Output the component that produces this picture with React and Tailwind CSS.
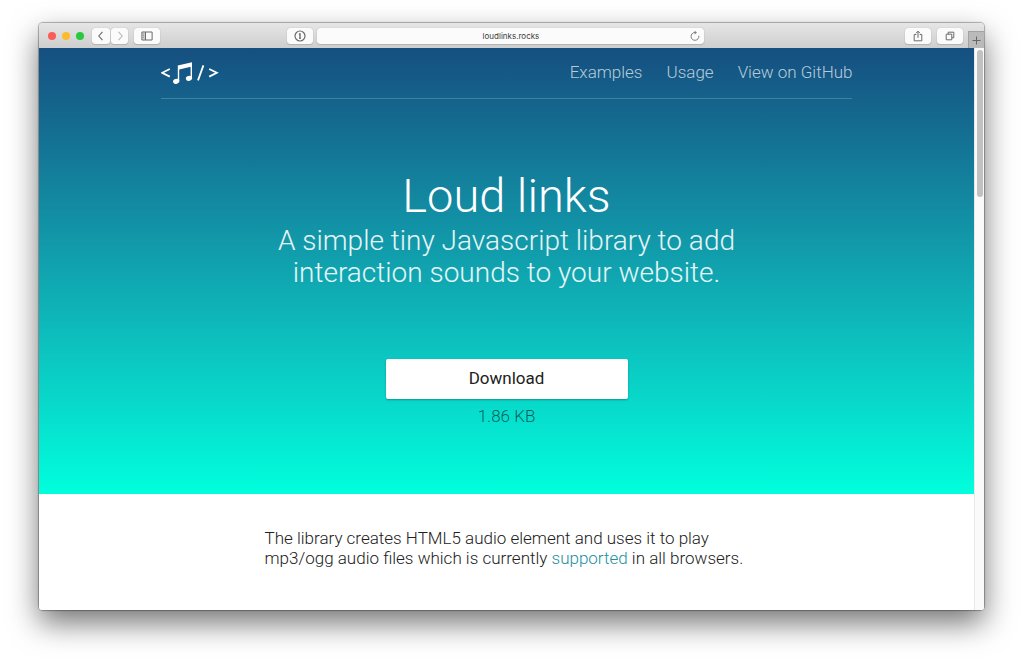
import React from "react";

const btn =
  "flex h-4 items-center justify-center rounded-[3px] bg-[#fbfbfb] text-[#6b6b6b] shadow-[0_0_1px_rgba(0,0,0,0.3),0_1px_1px_rgba(0,0,0,0.12)]";

function Icon({ children, size = 12, className = "" }) {
  return (
    <svg
      aria-hidden="true"
      width={size}
      height={size}
      viewBox={`0 0 ${size} ${size}`}
      fill="none"
      stroke="currentColor"
      strokeWidth="1"
      className={className}
    >
      {children}
    </svg>
  );
}

function Toolbar() {
  return (
    <div className="flex h-[25px] rounded-t-[4px] bg-linear-to-b from-[#e6e6e6] to-[#cecece] pl-[9px]">
      <div className="flex flex-[239_1_0%] items-center">
        <div className="flex gap-[6px]">
          <button aria-label="Close" className="size-2 rounded-full bg-[#fc5b57]" />
          <button aria-label="Minimize" className="size-2 rounded-full bg-[#fdbb2e]" />
          <button aria-label="Zoom" className="size-2 rounded-full bg-[#28c840]" />
        </div>
        <div className="ml-2 flex gap-px">
          <button aria-label="Back" className={`${btn} w-[18px]`}>
            <Icon><path d="M7.5 1.8 3.8 6l3.7 4.2" strokeWidth="1.1" /></Icon>
          </button>
          <button aria-label="Forward" className={`${btn} w-[17px]`}>
            <Icon className="text-[#bababa]"><path d="M4.5 1.8 8.2 6l-3.7 4.2" strokeWidth="1.1" /></Icon>
          </button>
        </div>
        <button aria-label="Sidebar" className={`${btn} ml-[6px] w-[26px]`}>
          <Icon>
            <path d="M1.5 2.5h3v7h-3z" fill="#d4d4d4" stroke="none" />
            <path d="M.9 2h10.2v8H.9zM4.5 2v8" />
            <path d="M1.8 4h1.4M1.8 5.7h1.4M1.8 7.4h1.4" strokeWidth=".6" />
          </Icon>
        </button>
      </div>
      <div className="flex items-center gap-1">
        <button aria-label="Password manager" className={`${btn} w-[26px]`}>
          <Icon>
            <circle cx="6" cy="6" r="5" strokeWidth="1.2" />
            <path d="M6 3.2v5.6M4.9 4h1M5.1 8.4h1.8" strokeWidth="1.4" />
          </Icon>
        </button>
        <div className="flex h-4 w-[387px] items-center rounded-[3px] bg-[#fbfbfb] shadow-[0_0_1px_rgba(0,0,0,0.3),0_1px_1px_rgba(0,0,0,0.12)]">
          <input
            aria-label="Address"
            defaultValue="loudlinks.rocks"
            className="ml-[15px] min-w-0 flex-1 bg-transparent text-center font-['Inter','Liberation_Sans',sans-serif] text-[8px] font-normal text-[#3c3c3c] outline-none"
          />
          <button aria-label="Reload" className="mr-[3px] text-[#7d7d7d]">
            <Icon>
              <path d="M9.8 5.8A3.9 3.9 0 1 1 6 2.5" />
              <path d="M5.6.7 8 2.6 5.6 4.5z" fill="currentColor" stroke="none" />
            </Icon>
          </button>
        </div>
      </div>
      <div className="flex flex-[279_1_0%] items-center justify-end">
        <button aria-label="Share" className={`${btn} w-[26px]`}>
          <Icon><path d="M4.3 4.5H2.2v6.3h7.6V4.5H7.7M6 7.8V1.2M4 3.2l2-2 2 2" /></Icon>
        </button>
        <button aria-label="Show all tabs" className={`${btn} ml-[6px] w-[26px]`}>
          <Icon><path d="M2.2 4.2h5.6v5.6H2.2zM4.2 4.2v-2h5.6v5.6h-2" /></Icon>
        </button>
        <button
          aria-label="New tab"
          className="ml-[5px] flex h-[17px] w-4 items-center justify-center self-end border-t border-l border-[#a2a2a2] bg-[#bababa] text-[#666]"
        >
          <Icon size={9}><path d="M4.5.5v8M.5 4.5h8" /></Icon>
        </button>
      </div>
    </div>
  );
}

function Logo() {
  return (
    <svg
      aria-hidden="true"
      width="58"
      height="24"
      viewBox="0 0 58 24"
      fill="none"
      stroke="#fff"
      strokeWidth="1.8"
    >
      <path d="M8.8 8 1.2 11.8l7.6 3.8M42.4 4.4 37 19.4M48.2 8l7.6 3.8-7.6 3.8" />
      <path d="M16.8 4.4 31 1.2v4.2L18.2 8.4v11.8h-1.4z" fill="#fff" stroke="none" />
      <path d="M29.6 3.2H31v14h-1.4z" fill="#fff" stroke="none" />
      <ellipse cx="15.2" cy="20.3" rx="3.2" ry="2.5" transform="rotate(-18 15.2 20.3)" fill="#fff" stroke="none" />
      <ellipse cx="28" cy="17.3" rx="3.2" ry="2.5" transform="rotate(-18 28 17.3)" fill="#fff" stroke="none" />
    </svg>
  );
}

export default function App() {
  return (
    <div className="overflow-hidden bg-white px-[39px] pt-[23px] pb-14 font-['Roboto',sans-serif] font-light">
      <div className="rounded-[4px] shadow-[0_0_1px_1px_rgba(0,0,0,0.3),0_13px_30px_rgba(0,0,0,0.55)]">
        <Toolbar />
        <div className="flex rounded-b-[3px] bg-white">
          <main className="min-w-0 flex-1">
            <div className="bg-linear-to-b from-[#154f80] to-[#00ffdd] pb-[68px] text-white">
              <header className="mx-auto flex h-[51px] w-[74%] items-center justify-between border-b border-white/20">
                <a href="#home" aria-label="Loud links home"><Logo /></a>
                <nav className="flex gap-6 text-[17px] text-white/70">
                  <a href="#examples">Examples</a>
                  <a href="#usage">Usage</a>
                  <a href="#github">View on GitHub</a>
                </nav>
              </header>
              <div className="flex flex-col items-center pt-[68px] text-center">
                <h1 className="text-[47px] leading-[58px]">Loud links</h1>
                <p className="text-[28px] leading-8 text-white/90">
                  A simple tiny Javascript library to add
                  <br />
                  interaction sounds to your website.
                </p>
                <button className="mt-[70px] h-10 w-[242px] rounded-[2px] bg-white text-[17px] font-normal text-[#212121] shadow-[0_1px_2px_rgba(0,0,0,0.3)]">
                  Download
                </button>
                <p className="mt-[7px] text-[17px] leading-5 text-black/60">1.86 KB</p>
              </div>
            </div>
            <p className="mx-auto w-[484px] pt-[34px] pb-[42px] text-[17px] leading-5 text-[#212121]">
              The library creates HTML5 audio element and uses it to play
              <br />
              mp3/ogg audio files which is currently{" "}
              <a href="#supported" className="text-[#1b90a0]">supported</a> in all browsers.
            </p>
          </main>
          <div className="w-[10px] rounded-br-[3px] border-l border-[#e8e8e8] bg-[#fafafa] pt-[2px] pl-[2px]">
            <div className="h-[147px] w-[6px] rounded-full bg-[#c1c1c1]" />
          </div>
        </div>
      </div>
    </div>
  );
}
